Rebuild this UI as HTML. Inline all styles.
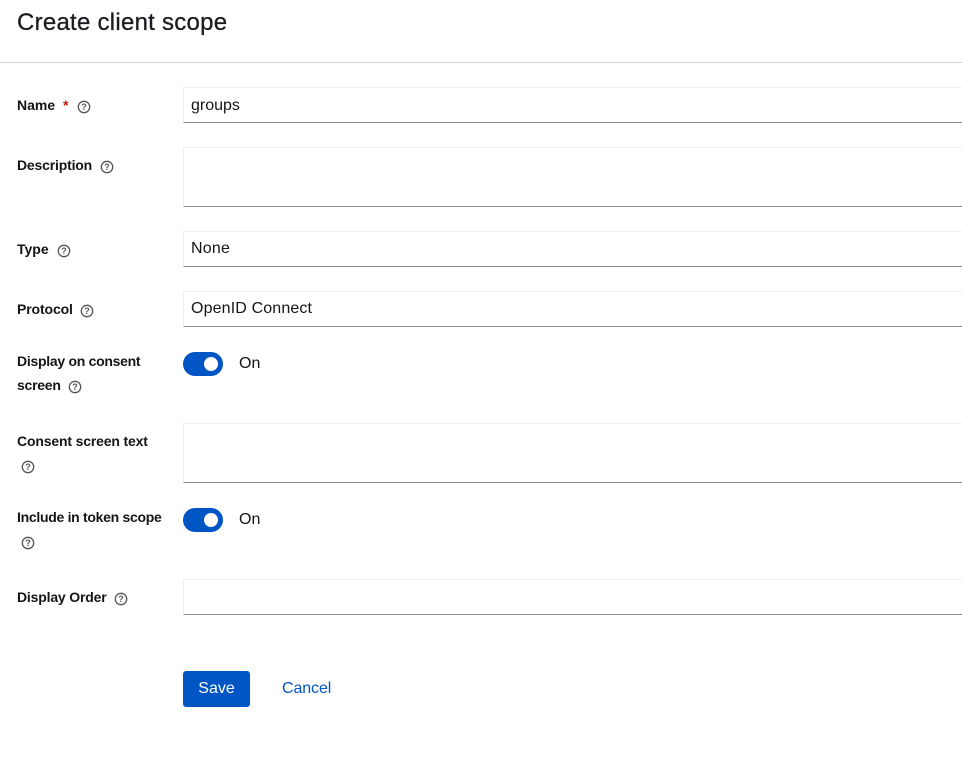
<!DOCTYPE html>
<html>
<head>
<meta charset="utf-8">
<style>
html,body{margin:0;padding:0;background:#fff;width:962px;height:774px;overflow:hidden}
body{font-family:"Liberation Sans",sans-serif;color:#151515;position:relative}
.t{position:absolute;white-space:nowrap}
.title{font-size:24px;line-height:30px;left:17px;top:8px;color:#1b1d21;letter-spacing:.26px;-webkit-text-stroke:.3px #1b1d21}
.l{font-size:14px;line-height:20px;font-weight:700;left:17px;color:#151515}
.v{font-size:16px;line-height:20px;color:#151515}
.box{position:absolute;left:183px;width:779px;box-sizing:border-box;background:#fff;border:1px solid #f0f0f0;border-right:0;border-bottom:1px solid #8a8d90}
.tg{position:absolute;left:183px;width:40px;height:24px;border-radius:12px;background:#0055c4}
.tg i{position:absolute;left:21px;top:5px;width:14px;height:14px;border-radius:50%;background:#fff}
.hr{position:absolute;left:0;top:62px;width:962px;height:1px;background:#d2d2d2}
svg{position:absolute;width:14px;height:14px}
.btn{position:absolute;left:183px;top:671px;width:67px;height:36px;background:#0055c4;border-radius:3px;color:#fff;font-size:16px;line-height:36px;text-align:center}
.cancel{left:282px;top:679px;font-size:16px;line-height:20px;color:#0055c4;letter-spacing:-.1px}
</style>
</head>
<body>
<div class="t title">Create client scope</div>
<div class="hr"></div>

<div class="t l" style="top:95px">Name</div>
<div class="t" style="left:63px;top:95px;font-size:14px;line-height:20px;font-weight:700;color:#c9190b">*</div>
<svg style="left:77px;top:100px" viewBox="0 0 14 14"><circle cx="7" cy="7" r="5.7" fill="none" stroke="#555" stroke-width="1.3"/><text x="7" y="10.2" font-size="9" font-weight="700" text-anchor="middle" fill="#555" font-family="Liberation Sans">?</text></svg>
<div class="box" style="top:87px;height:36px"></div>
<div class="t v" style="left:191px;top:96px">groups</div>

<div class="t l" style="top:155px;letter-spacing:-.18px">Description</div>
<svg style="left:100px;top:160px" viewBox="0 0 14 14"><circle cx="7" cy="7" r="5.7" fill="none" stroke="#555" stroke-width="1.3"/><text x="7" y="10.2" font-size="9" font-weight="700" text-anchor="middle" fill="#555" font-family="Liberation Sans">?</text></svg>
<div class="box" style="top:147px;height:60px"></div>

<div class="t l" style="top:239px">Type</div>
<svg style="left:57px;top:244px" viewBox="0 0 14 14"><circle cx="7" cy="7" r="5.7" fill="none" stroke="#555" stroke-width="1.3"/><text x="7" y="10.2" font-size="9" font-weight="700" text-anchor="middle" fill="#555" font-family="Liberation Sans">?</text></svg>
<div class="box" style="top:231px;height:36px"></div>
<div class="t v" style="left:191px;top:239px;letter-spacing:.2px">None</div>

<div class="t l" style="top:299px;letter-spacing:-.12px">Protocol</div>
<svg style="left:80px;top:304px" viewBox="0 0 14 14"><circle cx="7" cy="7" r="5.7" fill="none" stroke="#555" stroke-width="1.3"/><text x="7" y="10.2" font-size="9" font-weight="700" text-anchor="middle" fill="#555" font-family="Liberation Sans">?</text></svg>
<div class="box" style="top:291px;height:36px"></div>
<div class="t v" style="left:191px;top:299px;letter-spacing:.14px">OpenID Connect</div>

<div class="t l" style="top:351px;letter-spacing:-.28px">Display on consent</div>
<div class="t l" style="top:375px;letter-spacing:-.25px">screen</div>
<svg style="left:68px;top:380px" viewBox="0 0 14 14"><circle cx="7" cy="7" r="5.7" fill="none" stroke="#555" stroke-width="1.3"/><text x="7" y="10.2" font-size="9" font-weight="700" text-anchor="middle" fill="#555" font-family="Liberation Sans">?</text></svg>
<div class="tg" style="top:352px"><i></i></div>
<div class="t v" style="left:239px;top:354px">On</div>

<div class="t l" style="top:431px;letter-spacing:-.16px">Consent screen text</div>
<svg style="left:21px;top:460px" viewBox="0 0 14 14"><circle cx="7" cy="7" r="5.7" fill="none" stroke="#555" stroke-width="1.3"/><text x="7" y="10.2" font-size="9" font-weight="700" text-anchor="middle" fill="#555" font-family="Liberation Sans">?</text></svg>
<div class="box" style="top:423px;height:60px"></div>

<div class="t l" style="top:507px;letter-spacing:-.29px">Include in token scope</div>
<svg style="left:21px;top:536px" viewBox="0 0 14 14"><circle cx="7" cy="7" r="5.7" fill="none" stroke="#555" stroke-width="1.3"/><text x="7" y="10.2" font-size="9" font-weight="700" text-anchor="middle" fill="#555" font-family="Liberation Sans">?</text></svg>
<div class="tg" style="top:508px"><i></i></div>
<div class="t v" style="left:239px;top:510px">On</div>

<div class="t l" style="top:587px;letter-spacing:-.18px">Display Order</div>
<svg style="left:114px;top:592px" viewBox="0 0 14 14"><circle cx="7" cy="7" r="5.7" fill="none" stroke="#555" stroke-width="1.3"/><text x="7" y="10.2" font-size="9" font-weight="700" text-anchor="middle" fill="#555" font-family="Liberation Sans">?</text></svg>
<div class="box" style="top:579px;height:36px"></div>

<div class="btn">Save</div>
<div class="t cancel">Cancel</div>
</body>
</html>
